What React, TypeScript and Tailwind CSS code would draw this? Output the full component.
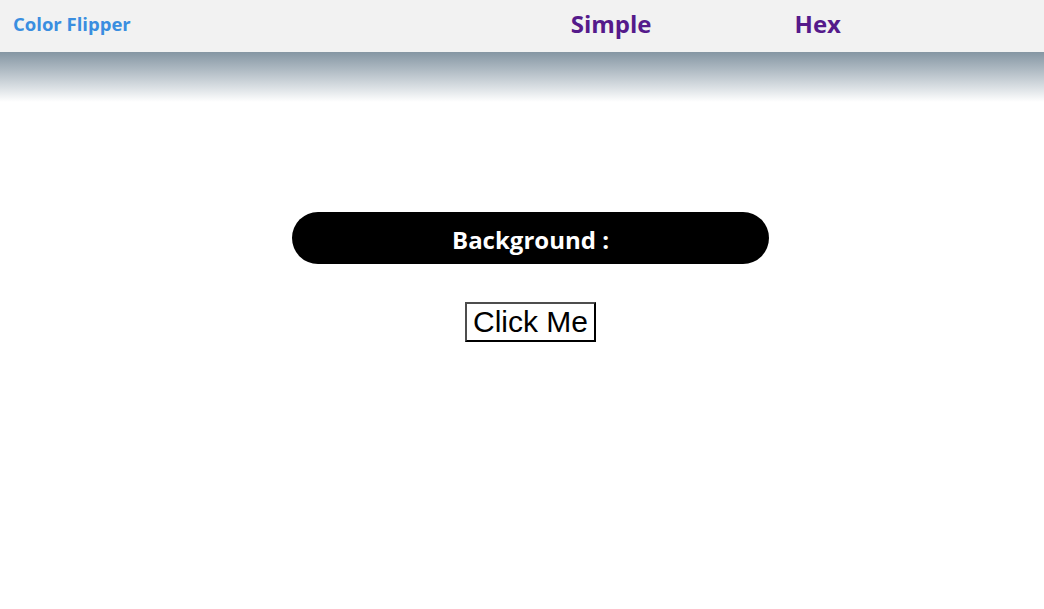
import React from "react";

function Navbar() {
  return (
    <>
      <nav className="flex h-[52px] items-center bg-[#f2f2f2] pb-[4px] pl-[13px] font-['Open_Sans',sans-serif]">
        <a className="text-[18.5px] font-bold text-[#3a8ee0]">Color Flipper</a>
        <a className="ml-[440px] text-[24px] font-bold text-[#551a8b]">Simple</a>
        <a className="ml-[143px] text-[24px] font-bold text-[#551a8b]">Hex</a>
      </nav>
      <div className="h-[50px] bg-gradient-to-b from-[#8596a3] to-white" />
    </>
  );
}

export default function App() {
  return (
    <div className="min-h-screen bg-white">
      <Navbar />
      <main className="flex flex-col items-center pl-[17px] pt-[110px]">
        <div className="flex h-[52px] w-[477px] items-center justify-center rounded-full bg-black pt-[3px]">
          <h2 className="text-[24px] font-bold text-white font-['Open_Sans',sans-serif]">
            Background :
          </h2>
        </div>
        <button className="mt-[38px] h-[40px] border-2 border-t-[#4d4d4d] border-l-[#4d4d4d] border-b-black border-r-black bg-white px-[6px] font-['Liberation_Sans',Arial,sans-serif] text-[30px] leading-none text-black">
          Click Me
        </button>
      </main>
    </div>
  );
}
